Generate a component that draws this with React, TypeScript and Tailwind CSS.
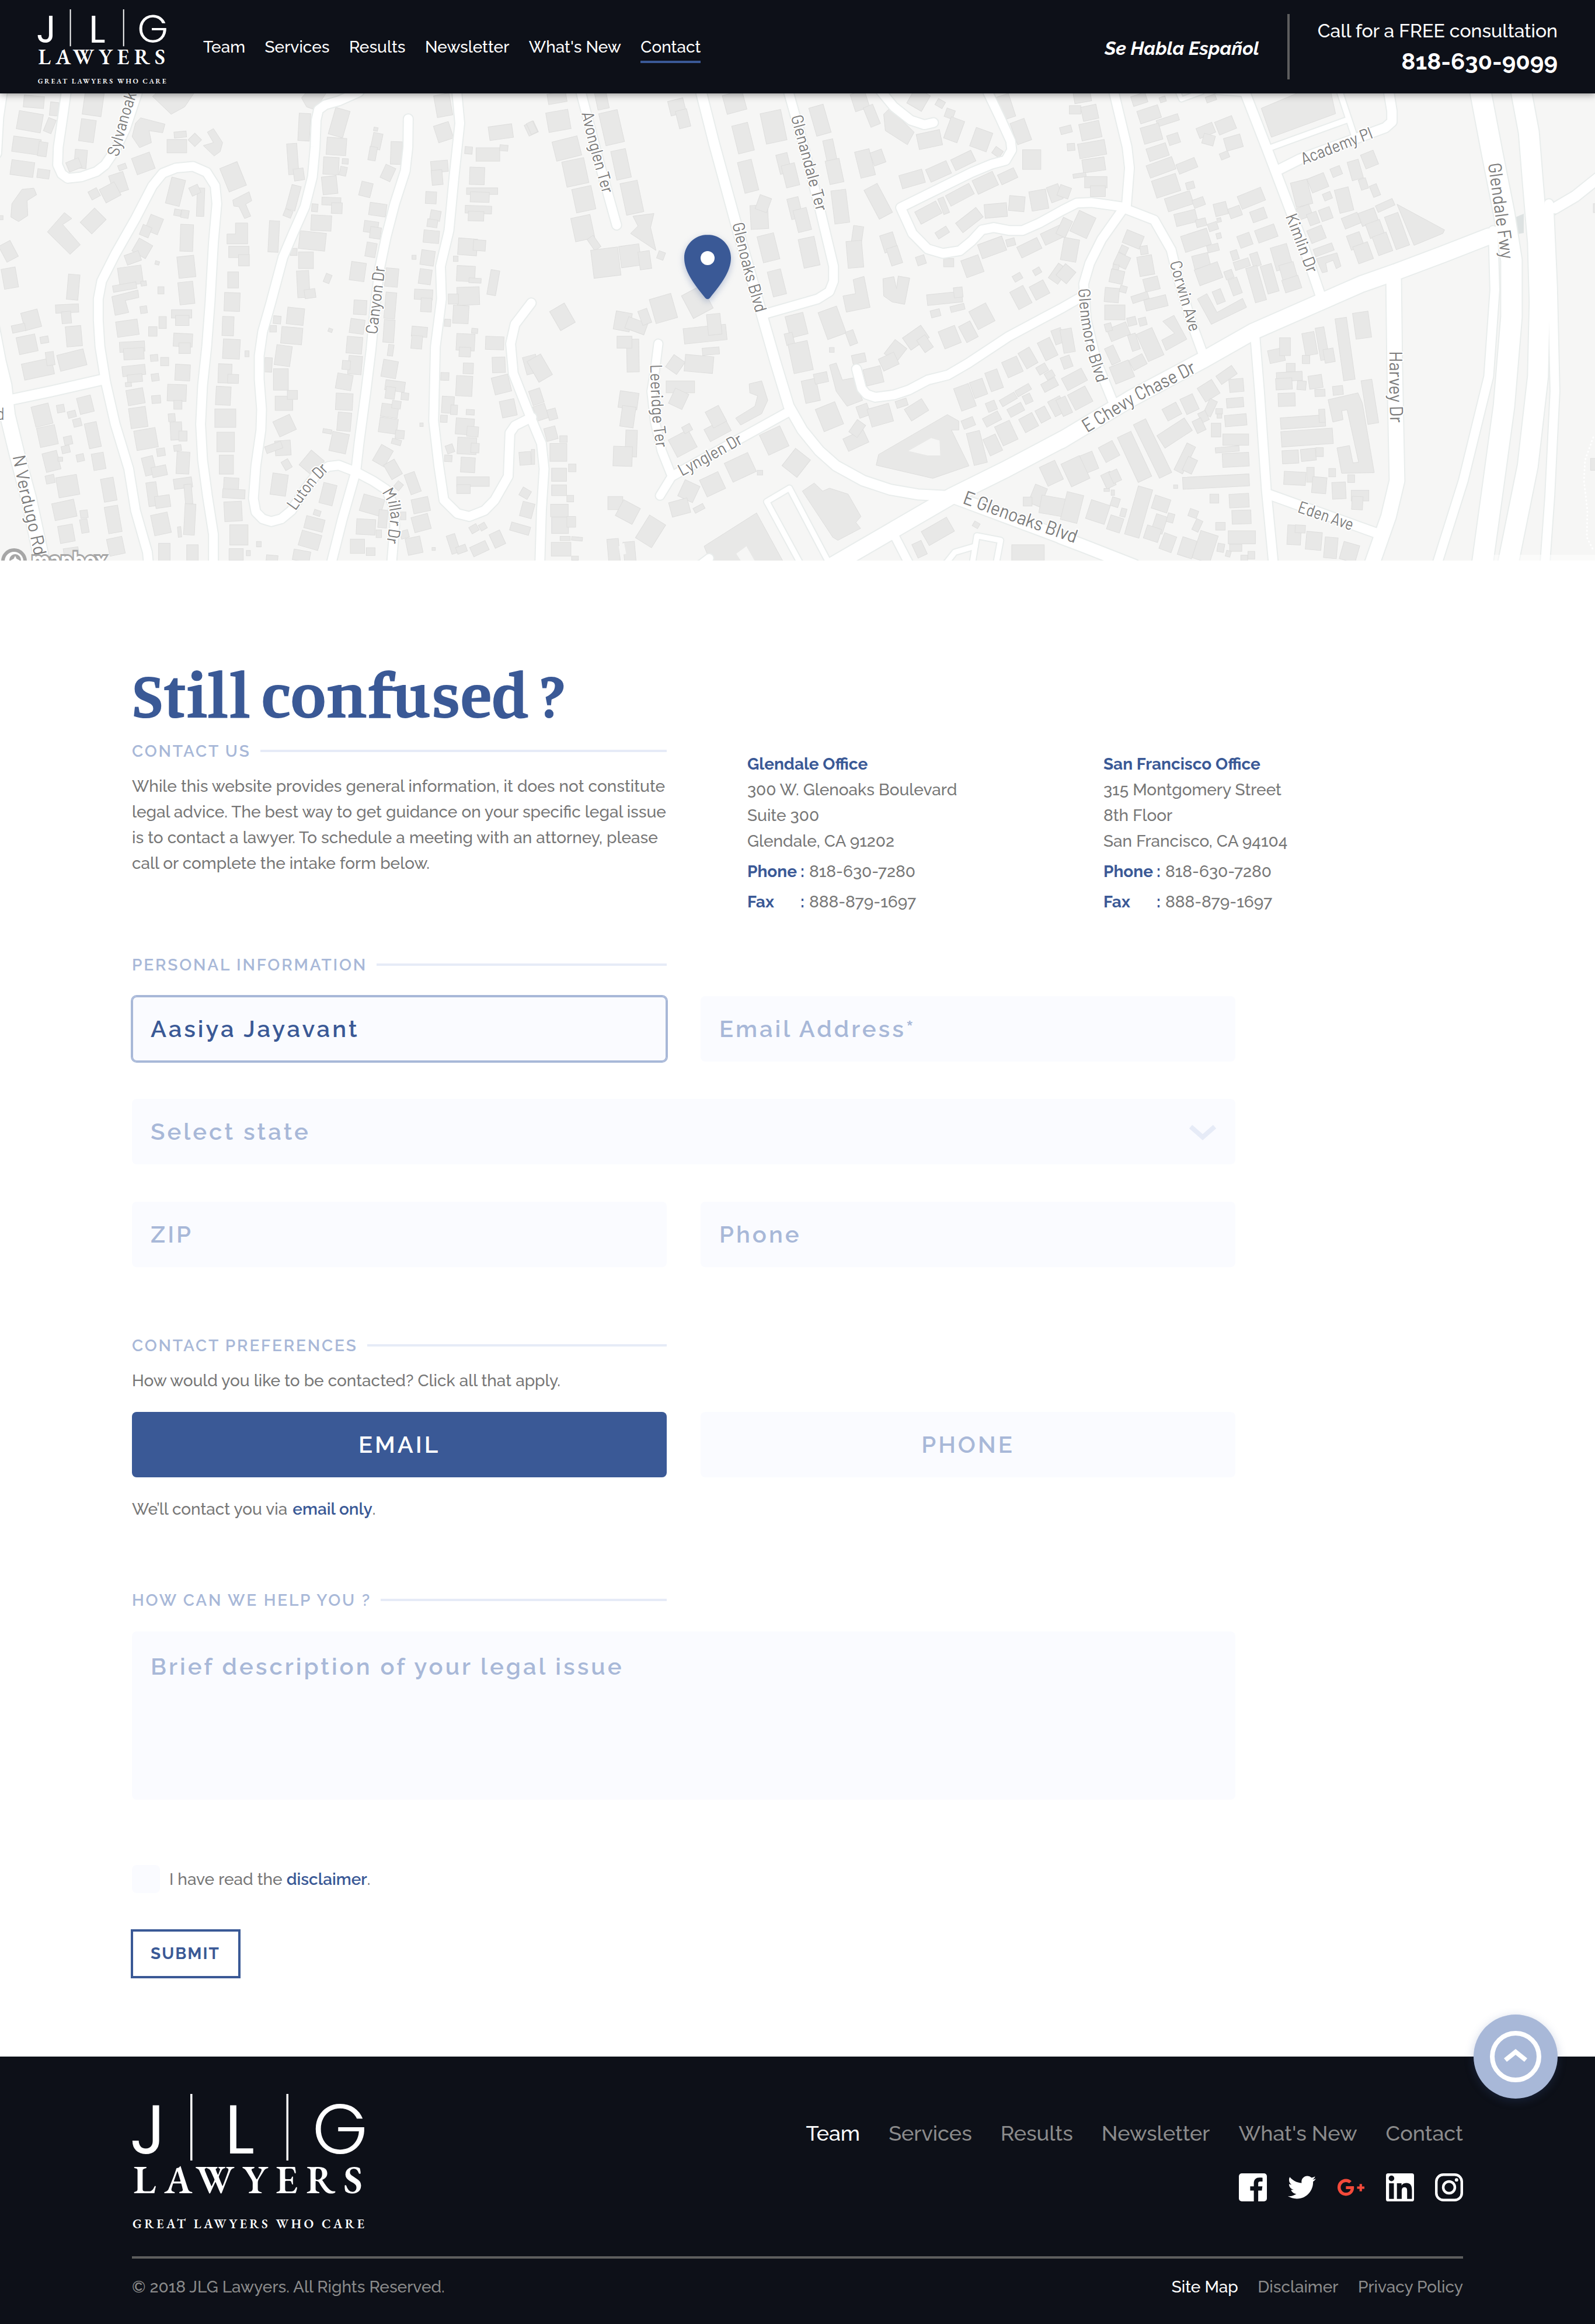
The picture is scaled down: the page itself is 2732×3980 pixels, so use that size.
import type { ReactNode } from 'react';
import { FaGooglePlusG } from 'react-icons/fa';

/* ---------- Map data: three tiles, each 1568 units square ---------- */

type Tile = {
  dx: number;
  sx: number;
  blocks: string;
  shapes: string[];
  holes: string[];
  roads: [number, string][];
  labels: [string, number, string][];
};

const TILE_SY = 1.96;

const tiles: Tile[] = [
  {
    dx: 0,
    sx: 1.7231,
    // centre x, centre y, width, height, rotation
    blocks:
      '100 28 60 40 5;88 95 72 62 10;160 52 25 45 6;147 108 24 48 22;78 175 82 52 8;126 187 26 48 8;66 252 68 50 8;128 270 36 30 8;275 35 56 78 8;258 125 44 75 8;238 220 36 62 5;218 240 40 34 -22;532 138 36 20 -5;522 177 58 45 0;575 156 28 32 45;423 235 56 58 -20;361 247 24 18 -20;350 300 44 64 -18;325 332 50 50 -28;278 337 28 30 -28;275 428 60 55 -45;688 280 55 85 -22;518 330 42 90 14;592 365 22 95 2;575 325 28 30 -25;524 400 20 22 10;546 405 22 26 10;455 440 40 56 22;430 462 28 36 22;420 520 46 50 30;392 552 44 34 -20;551 485 38 90 2;550 582 50 72 -6;385 612 70 62 -8;368 650 70 22 -10;550 670 44 75 -6;705 532 60 38 0;720 560 32 38 0;688 626 32 54 0;685 700 46 62 2;673 781 34 64 2;683 858 50 66 3;664 940 40 64 2;688 958 32 30 2;216 650 34 85 5;198 722 68 28 -3;196 752 28 40 -5;218 815 46 68 -5;92 760 50 60 -15;55 788 40 25 -12;80 842 56 58 -12;131 827 24 22 -10;212 895 80 55 -14;112 925 90 55 -12;148 890 24 45 -8;25 530 38 60 -28;29 620 42 68 -10;2 417 14 14 0;376 788 64 52 -8;424 726 20 24 -8;451 799 25 32 0;480 769 22 40 0;475 661 18 24 0;424 638 16 16 -8;464 569 12 12 15;536 740 60 28 0;538 762 40 34 0;540 828 56 44 3;545 855 34 36 0;390 850 74 34 -3;395 874 60 38 -3;455 888 22 22 -5;486 900 24 28 0;395 930 68 34 -6;398 956 44 26 -6;458 953 22 24 -8;539 937 44 54 3;379 977 18 14 -6;400 1018 50 52 -10;461 1027 26 26 -5;522 1005 56 56 2;525 1045 24 30 0;408 1088 50 68 -8;507 1088 20 26 -5;520 1133 34 60 -3;540 1150 24 34 0;431 1160 64 66 -10;475 1204 24 26 -8;524 1190 22 20 -8;540 1240 38 74 3;440 1250 34 62 -14;470 1268 44 34 -12;540 1308 54 34 -8;556 1345 22 66 -5;450 1345 30 80 -8;480 1370 44 40 -8;560 1430 32 104 3;475 1445 50 70 -12;530 1472 10 35 -5;485 1540 34 60 0;568 1545 34 60 0;659 1015 44 62 3;665 1090 62 62 0;666 1170 52 66 0;668 1246 42 64 0;682 1318 44 56 3;690 1344 66 30 3;688 1403 52 66 -3;705 1482 54 68 0;697 1548 42 40 0;764 1513 14 18 0;733 1543 12 18 0;803 1560 34 20 5;729 874 12 20 0;124 1080 52 70 -14;179 1058 22 26 -10;252 1045 42 56 -14;212 1077 24 22 -14;228 1105 24 26 -14;140 1150 54 66 -12;201 1165 24 28 -12;274 1147 36 85 -12;194 1195 24 24 -12;152 1235 44 64 -14;178 1228 14 14 0;237 1223 22 24 -12;291 1235 36 56 -10;200 1318 62 68 -10;148 1295 26 28 -12;321 1330 38 78 -10;190 1398 66 58 -12;248 1412 22 26 -8;334 1430 40 90 -10;196 1478 44 58 -10;249 1452 22 46 -10;342 1520 46 58 -12;210 1540 44 30 -8;898 113 34 92 3;1001 98 44 92 16;993 178 58 58 4;864 220 30 104 -4;882 272 30 40 -8;977 243 46 58 3;1019 228 18 18 3;1013 261 20 30 12;973 308 44 60 -6;866 350 28 84 15;850 403 24 24 22;929 384 18 26 5;978 362 56 26 2;994 385 32 36 2;948 435 60 52 3;922 495 78 60 6;808 480 30 105 3;867 532 20 24 0;903 560 44 56 0;895 640 36 90 -3;915 672 32 30 -8;967 621 18 30 22;872 748 50 56 6;818 760 22 26 5;806 790 20 22 0;861 813 62 56 5;836 880 46 68 8;792 911 22 48 3;829 960 44 72 0;838 1040 52 48 0;863 1012 30 30 0;840 1115 54 56 -25;835 1190 46 50 -4;808 1188 50 24 -20;846 1246 22 32 -30;920 1240 50 64 40;824 1313 46 72 8;975 795 12 12 20;1109 120 12 12 12;1112 160 28 54 12;1100 202 22 46 10;1170 200 34 76 2;1145 267 32 48 25;1080 322 34 48 14;1115 390 50 42 8;1095 448 42 38 8;1108 468 32 38 8;1095 525 30 48 10;1056 598 44 62 8;1156 618 38 62 5;1152 712 32 88 5;1063 718 38 48 3;1054 782 42 48 8;1148 798 32 76 4;1153 862 16 38 8;1046 845 46 56 5;1048 912 40 62 5;1022 912 24 30 5;1150 925 44 58 10;1016 968 46 52 10;1166 982 58 34 8;1152 1005 28 40 8;1195 1017 22 24 5;1150 1065 50 44 8;1170 1045 26 26 8;1016 1035 50 56 3;1016 1102 40 62 5;1146 1115 54 50 8;1180 1145 26 28 5;1170 1170 28 18 15;966 1134 26 14 10;1001 1172 50 66 12;1130 1216 40 62 30;1160 1262 36 56 -30;1176 1317 20 26 40;1218 1308 32 70 -20;1242 1382 50 48 -12;1243 1442 50 52 -15;1098 1382 64 58 16;1080 1455 56 52 3;1130 1428 26 60 5;1118 1478 16 26 0;1190 1418 16 26 0;1055 1520 42 48 0;1094 1538 26 26 0;1194 1480 24 26 -15;1222 1518 44 56 -12;1244 1112 10 12 0;968 1345 40 70 14;936 1408 20 18 18;928 1445 56 42 14;915 1500 60 52 16;890 1552 50 36 10;1308 40 46 74 -10;1309 130 46 58 -18;1478 130 70 46 -8;1568 118 30 40 -25;1383 191 22 24 5;1440 205 70 45 0;1487 183 24 20 5;1297 245 50 38 -5;1290 282 32 50 -5;1408 277 44 58 2;1272 350 32 40 3;1423 328 92 22 0;1416 348 56 34 2;1412 390 78 26 2;1405 412 46 32 2;1285 410 30 34 10;1276 436 30 26 8;1273 481 46 42 5;1262 552 40 50 8;1222 550 12 14 0;1380 515 56 56 4;1415 510 36 36 4;1345 555 14 18 0;1255 615 36 50 8;1375 605 54 52 3;1402 628 36 16 3;1456 635 26 84 10;1382 680 66 60 -2;1338 690 30 34 0;1250 675 54 34 3;1258 710 32 46 3;1360 742 46 60 3;1321 770 18 24 3;1238 800 46 34 5;1230 835 32 44 5;1401 797 18 16 5;1374 835 54 56 3;1372 868 34 32 3;1460 838 54 44 2;1472 911 38 52 -2;1382 923 30 36 2;1313 950 24 26 2;1370 982 48 68 3;1480 977 50 58 -14;1568 910 40 60 -15;1322 1045 36 56 3;1340 1062 20 32 3;1310 1092 20 24 3;1388 1070 24 18 3;1500 1057 44 56 -12;1372 1118 54 54 4;1395 1135 34 34 4;1378 1183 56 56 3;1402 1190 24 32 3;1328 1193 22 28 -20;1323 1225 22 22 3;1381 1247 42 50 3;1396 1303 96 32 0;1368 1328 40 30 0;1550 1225 34 44 -5;1550 1342 28 30 30;1556 1398 36 50 15;1535 1461 58 28 16;1415 1528 50 34 -25;1468 1496 34 50 -25;1338 1512 26 64 -18;1362 1530 30 24 -20;1399 1461 24 24 -30;1425 1454 20 22 -30;1280 1529 10 10 0',
    shapes: [
      '415,82 487,103 480,132 440,125 447,165 412,182 390,145 400,100',
      '612,130 630,118 657,165 650,195 632,210 600,175 630,165',
      '505,70 450,10 465,-5 575,-5 545,45',
      '65,322 100,318 108,340 80,360 82,410 55,430 32,415 35,370',
      '190,400 212,420 185,440 237,508 207,540 140,465',
      '687,358 735,330 743,360 725,372 740,412 722,420 705,380 690,378',
      '695,435 731,435 731,505 670,505 670,472 695,472',
      '330,682 407,660 410,685 370,695 380,735 340,745',
      '890,15 905,-5 965,-5 930,55 905,45',
    ],
    holes: [],
    roads: [
      [15, '196,-10 185,80 172,180 170,240 182,270 200,285 240,280 285,262 310,240 340,190 370,120 405,0'],
      [15, '1060,-5 1000,25 960,38 940,55 933,90 930,180 922,280 900,380 865,470 835,550 800,700 775,800 765,880 765,960 772,1060 770,1130 755,1250 748,1360 755,1405 775,1428 800,1437 830,1428 860,1400 900,1330 940,1270 970,1252 1000,1248 1050,1270'],
      [15, '440,1600 435,1540 400,1400 380,1260 340,1110 312,970 295,850 290,760 290,690 300,630 340,540 400,420 450,310 480,268 520,250 570,245 610,265 635,310 640,370 630,500 620,700 610,850 598,980 592,1110 598,1230 612,1350 630,1480 630,1600'],
      [17, '25,1030 150,1000 305,960'],
      [25, '-25,780 -5,900 12,980 22,1080 52,1220 85,1360 128,1590'],
      [20, '5,-20 -8,80 -14,200'],
      [15, '1205,85 1204,180 1196,260 1165,370 1140,480 1120,590 1105,740 1095,860 1080,1000 1060,1170 1050,1270 1010,1430 975,1590'],
      [15, '1050,1270 1100,1300 1140,1330 1160,1380 1165,1450 1155,1590'],
      [15, '1348,-10 1357,100 1340,280 1325,460 1300,580 1303,690 1285,850 1280,1100 1295,1250 1310,1365 1350,1410 1385,1420 1430,1400 1460,1365 1500,1285 1505,1140 1520,1115 1570,1087'],
      [15, '1568,703 1520,775 1507,840 1515,940 1560,1070 1598,1175 1606,1260 1598,1400 1593,1590'],
    ],
    labels: [
      ['Sylvanoak', 29, '349,214 362,160 380,85 404,0'],
      ['Canyon Dr', 29, '1113,810 1137,580'],
      ['Luton Dr', 29, '872,1402 905,1350 940,1300 972,1262'],
      ['Millar Dr', 29, '1127,1338 1146,1375 1153,1420 1141,1510'],
      ['N Verdugo Rd', 31, '37,1218 58,1340 80,1440 102,1556'],
      ['d', 29, '-8,1095 14,1095'],
    ],
  },
  {
    dx: 910,
    sx: 1.7231,
    blocks:
      '76 15 55 35 -10;80 92 66 66 -10;2 115 20 40 -25;105 185 76 66 -14;208 22 34 62 -12;237 115 56 110 -13;265 238 44 98 -12;130 265 66 86 -12;155 355 58 80 -12;297 350 52 108 -12;152 452 58 80 -12;185 502 22 46 -35;220 568 80 95 -7;292 545 60 72 -8;335 560 34 60 -8;383 544 20 26 20;430 45 46 50 -14;448 85 34 60 -14;600 30 60 65 -15;715 112 62 104 -12;625 150 48 96 -14;852 90 44 98 -16;640 278 42 106 -14;745 235 34 66 -14;765 275 40 76 -14;882 195 30 80 -12;895 262 42 80 -12;970 25 44 60 -18;1005 75 30 70 -22;673 415 52 80 -3;685 370 36 50 20;778 385 34 70 -14;800 425 40 76 -14;912 380 44 112 -7;700 518 50 90 -14;820 533 48 98 -12;962 480 30 70 8;955 540 46 90 -5;725 636 40 86 -14;1175 155 70 52 -12;1207 34 24 24 30;1143 20 50 60 30;1235 68 26 30 20;1248 122 42 76 20;1328 155 52 66 20;1400 45 40 80 -18;1445 128 44 76 -20;1376 197 26 26 35;1477 222 54 66 0;985 235 44 90 -14;1023 215 36 46 -20;1124 287 70 46 -16;1202 262 66 46 -24;1275 225 66 40 -26;1024 362 44 110 -28;1172 400 70 46 -28;1217 377 18 56 -22;1265 340 78 40 -28;1340 300 66 50 -25;1406 278 52 36 -25;1371 393 66 46 -5;1433 370 46 50 5;1498 358 50 66 -10;1545 335 36 54 -20;1293 425 76 40 -38;1213 467 38 24 -32;1055 500 40 60 -18;1072 545 34 60 -18;1360 517 76 50 -20;1415 500 26 24 -15;1470 518 66 40 -26;1540 475 66 42 -25;1150 560 26 30 -18;1232 568 30 28 0;1302 580 54 60 -20;1435 617 26 22 -30;1493 597 22 20 -30;1555 605 34 60 35;1220 688 104 36 -6;1260 668 26 34 -6;1258 720 42 20 -14;1193 738 28 24 -14;1330 748 56 68 -28;1445 685 44 66 -28;1500 660 46 50 -28;1290 800 38 60 -28;1235 818 52 62 -22;1135 820 66 50 -35;1162 840 30 50 -35;1075 865 44 60 38;1055 900 50 44 -25;783 778 54 74 -14;762 824 24 40 -14;888 770 58 96 -20;945 820 24 48 -20;887 861 14 16 0;795 885 58 100 -12;967 890 40 30 -12;1010 948 52 56 -14;825 998 44 76 -12;855 955 40 34 -12;880 1085 62 80 -22;980 1065 34 40 -20;1030 1080 66 62 -16;1093 1040 34 24 -18;1137 1062 60 46 -32;958 1165 66 46 -25;962 1125 30 50 35;1315 1190 40 110 -14;1280 1020 46 80 -20;1320 990 40 56 -20;1366 963 38 66 -20;1420 918 48 56 -24;1466 888 38 60 -30;1524 858 40 66 -26;1555 815 30 50 -20;1290 1106 36 30 -22;1358 1050 28 32 -22;1360 1093 50 32 -28;1408 1027 50 24 -30;1452 996 46 22 -30;1465 1025 24 30 -25;1430 1062 46 30 -28;1508 925 30 28 -30;1530 945 26 24 -30;1530 978 46 30 -28;1402 1140 48 70 -25;1362 1180 40 60 -25;1468 1105 44 50 -28;1510 1078 32 46 -28;1553 1050 40 56 -28;92 750 50 74 -30;390 722 66 84 -16;270 765 48 62 10;310 780 60 40 20;335 750 28 50 -20;490 700 66 86 -28;300 880 36 110 -1;275 835 44 40 0;513 808 126 52 -6;540 775 40 70 -6;495 908 84 56 5;425 910 40 50 35;530 865 50 24 -5;440 985 84 40 0;435 1025 44 56 25;287 1030 56 56 8;285 1085 40 70 8;295 1175 34 90 2;270 1218 56 66 2;447 1175 66 66 -28;460 1125 26 24 -28;550 1130 70 46 -28;545 1085 44 60 -28;717 1165 66 74 -25;782 1240 56 74 38;617 1255 76 70 -25;675 1273 16 16 0;535 1312 60 62 -25;465 1335 48 60 25;438 1390 56 50 -15;495 1393 32 18 -28;248 1375 44 44 0;285 1405 56 60 28;352 1470 56 90 32;243 1535 34 80 -5;290 1540 34 70 -5;25 922 46 80 -30;15 1018 34 50 -18;28 1070 36 50 -18;62 1077 26 36 -15;58 1142 34 44 -15;95 1160 22 22 0;80 1205 50 60 0;5 1220 10 50 0;121 1257 22 26 0;82 1280 44 44 0;82 1332 44 36 0;115 1360 20 22 0;83 1400 52 42 0;85 1450 50 54 0;118 1438 26 36 0;88 1530 58 46 0;100 1494 30 14 0;135 1495 32 12 5;129 1560 20 14 0;1200 1470 86 54 -30;1146 1530 30 50 -25;1313 1448 18 18 30;1466 1545 96 60 0;1535 1275 50 70 -25;1495 1350 38 66 22;1540 1385 76 60 10;1465 1370 26 30 0',
    shapes: [
      '300,412 362,403 352,450 368,527 293,470 315,445',
      '1040,70 1058,50 1130,130 1110,172 1045,125',
      '950,625 982,614 1000,718 930,734 920,680 957,672',
      '1038,622 1070,615 1078,655 1083,613 1117,620 1102,708 1065,700 1040,680',
      '880,912 900,905 918,962 950,955 978,1030 932,1050 900,1000',
      '1018,1248 1025,1212 1228,1078 1262,1100 1262,1130 1240,1130 1292,1250 1185,1292',
      '643,975 680,965 698,1030 680,1075 618,1113 603,1090 660,1050 668,1015 645,1005',
      '800,1335 835,1308 860,1335 880,1325 935,1345 973,1420 958,1440 972,1460 905,1500 890,1490',
      '510,1520 665,1408 745,1575 530,1575',
    ],
    holes: ['1113,1200 1180,1157 1205,1165 1207,1215 1170,1215', '605,1545 635,1520 665,1580 625,1580', '258,1520 274,1508 280,1545 262,1552'],
    roads: [
      [15, '145,-10 200,230 252,442'],
      [17, '500,-10 540,170 600,420 650,620 690,780 720,900 760,1050 800,1130 850,1200 900,1250 980,1300 1060,1330 1140,1346 1240,1352'],
      [15, '758,-10 800,160 850,380 892,580 892,630 880,665 845,690 690,740'],
      [15, '1030,-10 1070,45 1120,90 1160,105 1187,98'],
      [15, '1345,-10 1385,85 1415,160 1418,190 1400,225 1360,237 1300,265 1090,383 1125,470 1170,522 1215,537 1265,528 1300,495 1330,458 1365,450 1410,460 1450,460 1500,435 1568,392 1610,368 1653,366 1753,382'],
      [15, '960,925 975,990 990,1010 1015,1020 1070,1012 1115,995 1170,962 1230,945 1290,905 1410,815 1570,718 1625,682'],
      [27, '880,1590 1240,1352 1400,1262 1570,1160'],
      [21, '1240,1352 1400,1420 1570,1492'],
      [14, '375,840 365,930 355,1000 365,1100 385,1200 415,1285 380,1350'],
      [15, '415,1285 765,1065'],
      [9, '800,1590 695,1370 762,1325 885,1590'],
      [9, '1215,1590 1250,1540 1310,1520'],
      [9, '1300,1590 1315,1485 1385,1500 1370,1590'],
      [14, '1070,1480 1120,1590'],
      [14, '490,1590 525,1560'],
    ],
    labels: [
      ['Avonglen Ter', 29, '148,66 165,150 185,235 211,340'],
      ['Glenandale Ter', 29, '766,78 795,200 842,400'],
      ['Glenoaks Blvd', 29, '593,438 625,590 663,740'],
      ['Leeridge Ter', 29, '351,910 353,1000 358,1100 369,1192'],
      ['Lynglen Dr', 29, '444,1286 540,1228 628,1172'],
      ['E Glenoaks Blvd', 33, '1271,1375 1440,1445 1606,1511'],
    ],
  },
  {
    dx: 1820,
    sx: 1.7193,
    blocks:
      '58 10 50 40 -10;37 55 34 28 0;80 65 46 48 -12;82 125 60 56 -12;10 122 34 24 -15;87 187 80 50 -10;25 180 22 24 -5;92 240 66 44 -8;50 275 38 14 -8;98 298 66 38 0;104 328 44 36 0;5 330 34 38 20;255 70 64 44 -18;226 20 44 34 -18;295 20 18 18 -18;310 90 66 22 -18;262 135 56 56 -16;280 197 60 44 -18;327 153 34 34 -18;290 248 80 44 -20;305 310 74 60 -18;366 243 58 34 -22;376 309 24 24 -15;343 362 78 46 -18;401 366 34 28 -20;363 418 64 42 -14;408 434 30 26 -14;443 447 28 26 -18;461 425 12 14 -14;460 478 14 18 -14;393 493 80 56 -18;443 519 34 24 -14;408 562 48 44 -14;430 605 72 56 -20;466 388 38 42 -14;508 398 36 34 -20;577 408 44 38 -20;556 352 74 46 -22;422 124 50 36 -22;430 155 34 34 15;480 107 54 46 -22;503 165 50 44 -16;477 208 26 22 -22;437 17 30 20 -20;704 335 50 84 -14;752 300 52 50 -22;806 262 30 30 -22;862 257 34 64 -16;904 222 40 50 -22;886 304 22 36 -18;920 326 22 40 -22;780 345 24 24 -22;829 358 42 80 -14;775 405 34 40 -20;712 398 40 40 -20;738 420 30 40 -20;850 427 50 38 -22;900 415 50 46 -20;950 376 54 24 -24;748 473 46 46 -22;769 525 58 26 -20;862 495 40 50 -20;885 535 46 60 -20;920 455 44 50 -20;942 505 44 66 -20;985 462 42 116 -20;5 450 30 60 25;60 440 54 76 25;22 525 46 76 10;10 605 40 50 40;208 490 54 46 22;240 526 22 28 -8;180 525 22 26 25;175 562 40 42 25;245 578 44 66 -10;157 583 18 16 8;160 615 40 44 12;262 640 44 44 -14;145 677 42 48 5;179 657 20 22 15;228 685 50 24 -18;275 703 66 38 -14;154 735 60 50 0;165 800 60 44 -22;135 785 20 26 -15;204 765 26 28 -14;236 766 22 26 -14;210 835 24 56 -18;147 878 28 60 -25;175 935 60 60 -22;222 902 44 38 -28;258 843 50 100 -24;600 470 60 44 -20;537 493 38 42 -20;507 543 20 32 -18;528 573 46 28 -18;568 558 24 46 -18;490 608 24 28 -20;508 648 28 56 -20;570 640 34 120 -16;610 622 34 96 -16;645 550 50 80 -16;665 600 44 60 -16;675 640 50 44 -18;460 682 26 46 -22;15 830 34 80 -10;12 902 28 40 -20;35 960 66 46 -28;52 1023 58 58 -28;5 1050 30 60 -25;630 880 46 44 -12;655 850 32 60 0;728 840 36 76 -10;765 840 26 110 -10;785 880 30 46 -10;717 893 22 28 0;672 920 26 28 0;668 950 76 30 -3;652 975 48 38 -3;704 980 26 30 5;745 968 40 44 -8;758 1005 30 24 -3;811 997 30 30 -6;832 858 34 210 -8;882 778 46 88 -8;905 1035 32 148 -9;660 1028 50 44 -2;708 1103 132 38 -4;764 1082 18 44 -3;720 1155 152 52 -4;671 1220 48 44 -3;724 1213 44 40 -6;757 1204 22 30 0;684 1292 64 44 3;730 1280 22 50 0;756 1315 42 54 5;794 1273 20 28 0;850 1293 20 26 0;814 1333 40 56 -3;876 1350 52 36 0;868 1375 32 44 3;483 945 56 34 -35;430 998 50 54 -32;512 980 42 44 -5;508 1038 50 32 -5;510 1097 64 38 -5;374 1043 40 56 -25;322 1068 46 44 -28;435 1055 24 56 25;415 1085 24 34 -25;461 1067 20 18 0;462 1083 14 14 0;402 1115 28 44 -25;452 1130 28 46 0;510 1162 76 38 0;485 1195 70 18 -5;510 1230 78 46 -3;330 1140 96 50 -33;265 1192 40 200 -26;212 1220 44 166 -25;137 1202 46 56 -28;78 1238 40 62 -22;38 1268 60 84 -25;360 1225 28 100 26;375 1248 30 50 25;135 1298 30 50 -25;155 1285 26 40 -25;452 1303 196 40 -3;333 1320 12 12 0;130 1331 16 10 0;148 1340 10 18 0;155 1372 24 30 18;447 1360 26 30 0;520 1367 58 46 -3;28 1390 50 96 14;104 1405 58 66 18;155 1445 40 50 18;179 1407 16 28 15;224 1405 44 168 16;290 1378 48 46 18;385 1410 26 26 20;285 1445 34 60 18;265 1478 44 46 18;318 1425 20 30 15;397 1450 20 40 25;310 1508 38 56 20;367 1525 44 62 18;420 1522 54 96 18;465 1453 28 26 0;527 1422 56 46 -2;528 1490 80 44 0;466 1525 20 28 10;510 1525 36 24 0;488 1545 14 20 15;535 1560 20 20 0;556 1550 20 26 0;682 1482 40 66 3;700 1462 30 26 3;740 1502 46 60 5;790 1525 38 70 5;845 1540 48 60 16;1565 1245 20 40 0;1568 385 10 30 0',
    shapes: [
      '585,50 700,-5 790,-5 804,68 615,147',
      '985,372 1125,458 1120,470 1035,510',
      '747,555 808,535 820,580 806,588 797,560 775,570 780,598 765,602',
      '295,765 328,745 366,825 305,863 292,828 330,805',
      '397,690 425,672 455,735 530,688 542,718 438,775',
      '782,1028 870,1005 883,1040 918,1273 822,1275 808,1190 845,1182 855,1240 872,1238 838,1062 822,1065 826,1095 796,1103',
    ],
    holes: [],
    roads: [
      [15, '180,385 270,425 320,525 340,620 380,770 412,870'],
      [15, '180,385 115,490 80,570 62,640 70,760 100,900 150,1040'],
      [15, '150,-10 190,180 197,250 188,380'],
      [27, '-5,1165 200,1025 410,897 560,800 760,700 880,640 980,600 1120,540 1255,480'],
      [21, '-5,1490 60,1518 210,1585'],
      [16, '535,-10 600,180 650,330 700,480 760,680'],
      [16, '630,260 700,220 950,115 970,95 970,60 960,-10'],
      [9, '605,185 835,90'],
      [9, '815,-10 860,145'],
      [7, '338,-10 350,20 410,-5'],
      [7, '455,-5 540,2'],
      [15, '567,820 580,1000 600,1330 622,1590'],
      [25, '975,625 978,900 985,1300 960,1420 908,1590'],
      [16, '605,1345 930,1478'],
      [15, '1268,460 1273,660 1255,950 1180,1300 1100,1590'],
      [15, '1432,370 1443,650 1450,1000 1435,1350 1420,1590'],
      [18, '1450,385 1510,345 1590,272'],
      [35, '1230,-10 1265,200 1300,400 1322,560 1322,750 1300,1050 1270,1300 1235,1590'],
      [34, '1350,-10 1373,130 1385,300 1400,500 1405,700 1400,950 1370,1250 1310,1590'],
    ],
    labels: [
      ['Academy Pl', 29, '709,240 918,148'],
      ['Kimlin Dr', 29, '656,412 722,608'],
      ['Corwin Ave', 29, '315,568 338,660 375,804'],
      ['Glenmore Blvd', 29, '46,656 54,760 70,860 102,975'],
      ['E Chevy Chase Dr', 33, '72,1140 230,1030 397,934'],
      ['Harvey Dr', 32, '962,865 962,980 965,1108'],
      ['Glendale Fwy', 32, '1253,236 1272,390 1292,560'],
      ['Eden Ave', 29, '690,1405 852,1468'],
    ],
  },
];

const toPoints = (tile: Tile, list: string) =>
  list.split(' ').map((pair) => {
    const [x, y] = pair.split(',').map(Number);
    return [tile.dx + x / tile.sx, y / TILE_SY] as [number, number];
  });

const toLine = (points: [number, number][]) =>
  'M' + points.map(([x, y]) => `${x.toFixed(1)} ${y.toFixed(1)}`).join('L');

const lengthOf = (points: [number, number][]) =>
  points.slice(1).reduce((sum, [x, y], i) => sum + Math.hypot(x - points[i][0], y - points[i][1]), 0);

const roads = tiles.flatMap((t) => t.roads.map(([width, list]) => ({ width, d: toLine(toPoints(t, list)) })));

function StreetMap() {
  return (
    <svg viewBox="0 0 2732 800" className="block h-[800px] w-full bg-[#f6f6f5]" aria-label="Map of Glendale office">
      <g fill="#e8e8e7" stroke="#dededd" strokeWidth="1">
        {tiles.map((t) =>
          t.blocks.split(';').map((row, i) => {
            const [cx, cy, w, h, a] = row.split(' ').map(Number);
            const x = t.dx + cx / t.sx;
            const y = cy / TILE_SY;
            const bw = w / t.sx;
            const bh = h / TILE_SY;
            return (
              <rect key={`${t.dx}-${i}`} x={x - bw / 2} y={y - bh / 2} width={bw} height={bh} transform={`rotate(${a} ${x} ${y})`} />
            );
          }),
        )}
        {tiles.map((t) => t.shapes.map((s) => <path key={s} d={toLine(toPoints(t, s)) + 'Z'} />))}
      </g>
      <g fill="#f6f6f5">{tiles.map((t) => t.holes.map((s) => <path key={s} d={toLine(toPoints(t, s)) + 'Z'} />))}</g>
      <path d="M2596 212l14-6v33l-12 2zM2656 205l6-4 4 6-6 4z" fill="#dde2e2" />
      <g fill="none" stroke="#e9edec" strokeLinecap="round" strokeLinejoin="round">
        {roads.map((r, i) => (
          <path key={i} d={r.d} strokeWidth={r.width + 4} />
        ))}
      </g>
      <g fill="none" stroke="#fff" strokeLinecap="round" strokeLinejoin="round">
        {roads.map((r, i) => (
          <path key={i} d={r.d} strokeWidth={r.width} />
        ))}
        <path d="M2729 589l-14 39-2 35 6 51-1 46 12 24" strokeWidth="3" strokeDasharray="0.5 6" />
      </g>
      <g fill="#7c7c7c" stroke="#fff" strokeWidth="4" strokeLinejoin="round" paintOrder="stroke" className="font-['Barlow','Roboto',sans-serif]">
        {tiles.map((t) =>
          t.labels.map(([text, size, list], i) => {
            const pts = toPoints(t, list);
            const id = `street-${t.dx}-${i}`;
            return (
              <g key={id}>
                <path id={id} d={toLine(pts)} fill="none" stroke="none" />
                <text fontSize={size}>
                  <textPath href={`#${id}`} textLength={lengthOf(pts) - 1} lengthAdjust="spacingAndGlyphs">
                    {text}
                  </textPath>
                </text>
              </g>
            );
          }),
        )}
      </g>
      <rect x="2528" y="790" width="204" height="10" fill="#fff" opacity=".5" />
      <g>
        <circle cx="24" cy="801" r="19" fill="#fff" stroke="#a6a6a6" strokeWidth="6" />
        <circle cx="26" cy="799" r="10" fill="#a6a6a6" />
        <path d="M26 792l2.500 5 5 2.500-5 2.500-2.500 5-2.500-5-5-2.500 5-2.500z" fill="#fff" />
        <text x="54" y="812" fontSize="37" textLength="128" lengthAdjust="spacingAndGlyphs" fill="#fff" stroke="#a6a6a6" strokeWidth="6" paintOrder="stroke" className="font-['Montserrat','Lato',sans-serif] font-bold">
          mapbox
        </text>
      </g>
      <g className="drop-shadow-[0_4px_6px_rgba(59,89,152,0.35)]">
        <path
          d="M1212 242c-22.100 0-40 17.700-40 39.500 0 24 17.500 45.500 36.200 69a4.900 4.900 0 0 0 7.600 0c18.700-23.500 36.200-45 36.200-69 0-21.800-17.900-39.500-40-39.500z"
          fill="#3a5996"
        />
        <circle cx="1212" cy="282" r="12" fill="#fff" />
      </g>
    </svg>
  );
}

/* ---------- Shared pieces ---------- */

function Logo({ className }: { className: string }) {
  return (
    <svg viewBox="0 0 400 231" className={`overflow-visible ${className}`} fill="#fff" aria-label="JLG Lawyers">
      <g className="font-['Poppins','Lato',sans-serif] font-normal" fontSize="118">
        <text x="-4" y="102">J</text>
        <text x="159" y="102">L</text>
        <text x="309" y="102" fontSize="121" className="font-light">G</text>
      </g>
      <path d="M100 0h3.500v114H100zM264.500 0h3.500v114h-3.500z" />
      <text x="2" y="170" fontSize="67" textLength="393" className="font-['EB_Garamond','Liberation_Serif',serif] font-semibold">
        LAWYERS
      </text>
      <text x="1" y="230" fontSize="22" textLength="397" className="font-['EB_Garamond','Liberation_Serif',serif] font-semibold">
        GREAT LAWYERS WHO CARE
      </text>
    </svg>
  );
}

function SectionLabel({ children, className = '' }: { children: ReactNode; className?: string }) {
  return (
    <div className={`flex h-11 w-[916px] items-center gap-4 ${className}`}>
      <h2 className="pt-0.5 text-[28px] leading-[44px] font-semibold tracking-[2.8px] whitespace-nowrap text-[#a8b8d8]">{children}</h2>
      <div className="h-1 flex-1 bg-[#e6ebf7]" />
    </div>
  );
}

function Field({ children, className }: { children: ReactNode; className: string }) {
  return (
    <div className={`flex h-28 items-center rounded-lg bg-[#fafbff] px-8 text-[40px] leading-[56px] font-semibold tracking-[4px] ${className}`}>
      {children}
    </div>
  );
}

function Office({ name, lines }: { name: string; lines: string[] }) {
  return (
    <address className="w-[610px] pt-[23px] text-[28px] leading-[44px] font-medium text-[#777] not-italic">
      <p className="font-bold text-[#3a5996]">{name}</p>
      {lines.map((line) => (
        <p key={line}>{line}</p>
      ))}
      {[
        ['Phone', '818-630-7280'],
        ['Fax', '888-879-1697'],
      ].map(([label, value]) => (
        <p key={label} className="mt-2 flex">
          <b className="w-[91px] text-[#3a5996]">{label}</b>
          <b className="w-[15px] text-[#3a5996]">:</b>
          {value}
        </p>
      ))}
    </address>
  );
}

const navItems = ['Team', 'Services', 'Results', 'Newsletter', "What's New", 'Contact'];

function Header() {
  return (
    <header className="relative z-10 flex h-40 items-center bg-[#0d1018] pr-16 pl-16 text-white shadow-[0_2px_12px_rgba(0,0,0,0.4)]">
      <Logo className="h-[128px] w-[222px]" />
      <nav className="ml-[62px] flex gap-[33.500px]">
        {navItems.map((item) => (
          <a
            key={item}
            className={`relative flex h-14 items-center pt-0.5 text-[28px] font-medium ${
              item === 'Contact' ? "after:absolute after:inset-x-0 after:bottom-0 after:h-1 after:bg-[#3a5996] after:content-['']" : ''
            }`}
          >
            {item}
          </a>
        ))}
      </nav>
      <p className="mt-1.5 ml-auto text-[32px] font-bold italic">Se Habla Español</p>
      <div className="mr-12 ml-12 h-28 w-1 bg-[#5e5e5e]" />
      <div className="pt-px text-right">
        <p className="text-[32px] leading-[48px] font-medium">Call for a FREE consultation</p>
        <p className="text-[40px] leading-[56px] font-bold">818-630-9099</p>
      </div>
    </header>
  );
}

/* ---------- Social icons ---------- */

function SocialIcons() {
  return (
    <div className="mt-[47px] flex gap-9 text-white">
      <svg viewBox="0 0 24 24" className="size-12 rounded-[5px]" fill="currentColor">
        <path d="M22.676 0H1.324C.593 0 0 .593 0 1.324v21.352C0 23.408.593 24 1.324 24h11.494v-9.294H9.689v-3.621h3.129V8.410c0-3.099 1.894-4.785 4.659-4.785 1.325 0 2.464.097 2.796.141v3.240h-1.921c-1.500 0-1.792.721-1.792 1.771v2.311h3.584l-.465 3.630H16.560V24h6.115c.733 0 1.325-.592 1.325-1.324V1.324C24 .593 23.408 0 22.676 0" />
      </svg>
      <svg viewBox="0 0 24 24" className="size-12" fill="currentColor">
        <path d="M23.954 4.569c-.885.389-1.830.654-2.825.775 1.014-.611 1.794-1.574 2.163-2.723-.951.555-2.005.959-3.127 1.184-.896-.959-2.173-1.559-3.591-1.559-2.717 0-4.920 2.203-4.920 4.917 0 .390.045.765.127 1.124C7.691 8.094 4.066 6.130 1.640 3.161c-.427.722-.666 1.561-.666 2.475 0 1.710.870 3.213 2.188 4.096-.807-.026-1.566-.248-2.228-.616v.061c0 2.385 1.693 4.374 3.946 4.827-.413.111-.849.171-1.296.171-.314 0-.615-.030-.916-.086.631 1.953 2.445 3.377 4.604 3.417-1.680 1.319-3.809 2.105-6.102 2.105-.390 0-.779-.023-1.170-.067 2.189 1.394 4.768 2.209 7.557 2.209 9.054 0 13.999-7.496 13.999-13.986 0-.209 0-.420-.015-.630.961-.689 1.800-1.560 2.460-2.548z" />
      </svg>
      <FaGooglePlusG className="size-12 text-[#f44a3a]" />
      <svg viewBox="0 0 24 24" className="size-12">
        <rect width="24" height="24" rx="1.800" fill="currentColor" />
        <g fill="#0d1018" transform="translate(-1.500 -1.900) scale(1.160)">
          <path d="M20.447 20.452h-3.554v-5.569c0-1.328-.027-3.037-1.852-3.037-1.853 0-2.136 1.445-2.136 2.939v5.667H9.351V9h3.414v1.561h.046c.477-.900 1.637-1.850 3.370-1.850 3.601 0 4.267 2.370 4.267 5.455zM7.119 20.452H3.555V9h3.564z" />
          <circle cx="5.337" cy="5.370" r="2.064" />
        </g>
      </svg>
      <svg viewBox="0 0 48 48" className="size-12" fill="none" stroke="currentColor" strokeWidth="4.400">
        <rect x="2.200" y="2.200" width="43.600" height="43.600" rx="12" />
        <circle cx="24" cy="24" r="10" />
        <circle cx="36.800" cy="11.200" r="2.900" fill="currentColor" stroke="none" />
      </svg>
    </div>
  );
}

function Footer() {
  return (
    <footer className="relative h-[458px] bg-[#0d1018] px-[226px] pt-16 font-medium text-[#8b8b8b]">
      <button className="absolute -top-18 right-16 flex size-36 items-center justify-center rounded-full bg-[#a8b8d8] shadow-[0_4px_16px_rgba(59,89,152,0.25)]">
        <svg viewBox="0 0 88 88" className="size-[88px]" fill="none" stroke="#fff" strokeWidth="8">
          <circle cx="44" cy="44" r="40" />
          <path d="M26.500 50L44 36l17.500 14" />
        </svg>
      </button>
      <div className="flex h-[278px] justify-between">
        <Logo className="h-[231px] w-[400px]" />
        <div className="flex flex-col items-end pt-[45px]">
          <nav className="flex gap-[49px] text-[36px] leading-[44px]">
            {navItems.map((item) => (
              <a key={item} className={item === 'Team' ? 'text-white' : ''}>
                {item}
              </a>
            ))}
          </nav>
          <SocialIcons />
        </div>
      </div>
      <div className="h-1 bg-[#5e5e5e]" />
      <div className="mt-[27px] flex justify-between text-[28px] leading-[44px]">
        <p>© 2018 JLG Lawyers. All Rights Reserved.</p>
        <div className="flex gap-[33.500px]">
          <a className="text-white">Site Map</a>
          <a>Disclaimer</a>
          <a>Privacy Policy</a>
        </div>
      </div>
    </footer>
  );
}

export default function App() {
  return (
    <div className="w-[2732px] overflow-hidden bg-white font-['Raleway','Lato',sans-serif]">
      <Header />
      <StreetMap />
      <main className="h-[2562px] pt-[172px] pl-[226px]">
        <h1 className="font-['Manuale','Noto_Serif','DejaVu_Serif',serif] text-[111.500px] leading-[112px] font-bold text-[#3a5996]">
          Still confused ?
        </h1>
        <div className="mt-5 flex h-[366px]">
          <div className="w-[916px]">
            <SectionLabel>CONTACT US</SectionLabel>
            <p className="mt-[17px] text-[28px] leading-[44px] font-medium whitespace-nowrap text-[#777]">
              While this website provides general information, it does not constitute
              <br />
              legal advice. The best way to get guidance on your specific legal issue
              <br />
              is to contact a lawyer. To schedule a meeting with an attorney, please
              <br />
              call or complete the intake form below.
            </p>
          </div>
          <div className="ml-[138px] flex">
            <Office name="Glendale Office" lines={['300 W. Glenoaks Boulevard', 'Suite 300', 'Glendale, CA 91202']} />
            <Office name="San Francisco Office" lines={['315 Montgomery Street', '8th Floor', 'San Francisco, CA 94104']} />
          </div>
        </div>

        <SectionLabel>PERSONAL INFORMATION</SectionLabel>
        <div className="mt-8 grid w-[1890px] grid-cols-[916px_916px] gap-x-[58px] gap-y-16">
          <Field className="text-[#3a5996] shadow-[0_0_0_2px_#a8b8d8,inset_0_0_0_2px_#a8b8d8]">Aasiya Jayavant</Field>
          <Field className="text-[#a8b8d8]">Email Address*</Field>
          <Field className="col-span-2 justify-between text-[#a8b8d8]">
            Select state
            <svg viewBox="0 0 48 28" className="mt-1 h-7 w-12" fill="none" stroke="#e6ebf7" strokeWidth="8">
              <path d="M3.500 3.500L24 21.500l20.500-18" />
            </svg>
          </Field>
          <Field className="text-[#a8b8d8]">ZIP</Field>
          <Field className="text-[#a8b8d8]">Phone</Field>
        </div>

        <SectionLabel className="mt-28">CONTACT PREFERENCES</SectionLabel>
        <p className="mt-[17px] text-[28px] leading-[44px] font-medium text-[#777]">
          How would you like to be contacted? Click all that apply.
        </p>
        <div className="mt-[31px] grid w-[1890px] grid-cols-[916px_916px] gap-x-[58px]">
          <button className="h-28 rounded-lg bg-[#3a5996] text-[40px] font-semibold tracking-[4px] text-white">EMAIL</button>
          <button className="h-28 rounded-lg bg-[#fafbff] text-[40px] font-semibold tracking-[4px] text-[#a8b8d8]">PHONE</button>
        </div>
        <p className="mt-[33px] text-[28px] leading-[44px] font-medium text-[#777]">
          We’ll contact you via <span className="ml-0.5 font-semibold text-[#3a5996]">email only</span>.
        </p>

        <SectionLabel className="mt-[111px]">HOW CAN WE HELP YOU ?</SectionLabel>
        <div className="mt-8 h-72 w-[1890px] rounded-lg bg-[#fafbff] p-8 text-[40px] leading-[56px] font-semibold tracking-[4px] text-[#a8b8d8]">
          Brief description of your legal issue
        </div>

        <div className="mt-28 flex items-center gap-4 text-[28px] leading-[44px] font-medium text-[#777]">
          <div className="size-12 rounded-lg bg-[#fafbff]" />
          <p className="pt-0.5">
            I have read the <span className="font-semibold text-[#3a5996]">disclaimer</span>.
          </p>
        </div>
        <button className="mt-[62px] -ml-0.5 flex h-[84px] w-[188px] items-center border-4 border-[#3a5996] pl-[30px] text-[28px] font-bold tracking-[2px] text-[#3a5996]">
          SUBMIT
        </button>
      </main>
      <Footer />
    </div>
  );
}
